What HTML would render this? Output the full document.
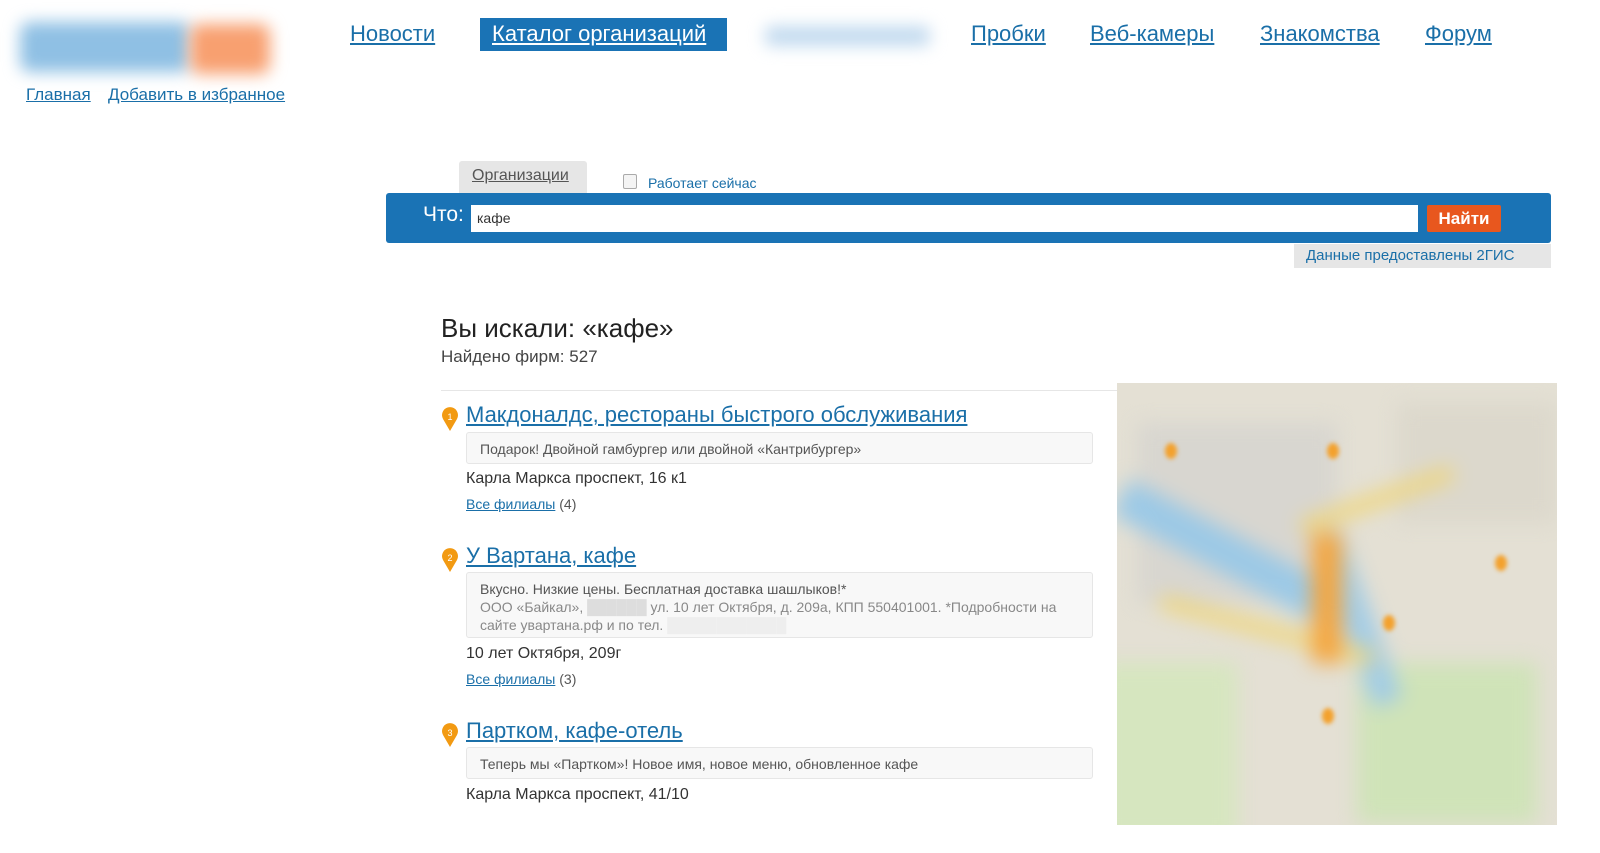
<!DOCTYPE html>
<html><head><meta charset="utf-8"><style>
*{margin:0;padding:0;box-sizing:border-box}
body{width:1600px;height:853px;background:#fff;font-family:"Liberation Sans",sans-serif;position:relative;overflow:hidden;color:#333}
.a{position:absolute}
a{color:#1a6fa8;text-decoration:underline}
.nav{font-size:22px;top:21px}
.blur{filter:blur(8px)}
.box{position:absolute;left:466px;width:627px;background:#f8f8f8;border:1px solid #e6e6e6;border-radius:3px;font-size:14px;color:#555;padding:7px 13px;line-height:18px}
.title{position:absolute;left:466px;font-size:22px}
.addr{position:absolute;left:466px;font-size:16px;color:#333}
.fil{position:absolute;left:466px;font-size:14px;color:#555}
.pin{position:absolute;left:441px;width:18px;height:26px}
</style></head><body>
<div class="a blur" style="left:20px;top:22px;width:170px;height:50px;background:#8fc0e4;border-radius:10px"></div>
<div class="a blur" style="left:190px;top:24px;width:80px;height:50px;background:#f8a070;border-radius:10px"></div>
<a class="a" style="left:26px;top:85px;font-size:17px">Главная</a>
<a class="a" style="left:108px;top:85px;font-size:17px">Добавить в избранное</a>
<a class="a nav" style="left:350px">Новости</a>
<div class="a" style="left:480px;top:18px;width:247px;height:33px;background:#1a73b5"></div>
<a class="a nav" style="left:492px;color:#fff">Каталог организаций</a>
<div class="a blur" style="left:765px;top:26px;width:165px;height:20px;background:#c2daef;border-radius:6px"></div>
<a class="a nav" style="left:971px">Пробки</a>
<a class="a nav" style="left:1090px">Веб-камеры</a>
<a class="a nav" style="left:1260px">Знакомства</a>
<a class="a nav" style="left:1425px">Форум</a>

<div class="a" style="left:459px;top:161px;width:128px;height:32px;background:#e6e6e6;border-radius:3px 3px 0 0"></div>
<a class="a" style="left:472px;top:167px;font-size:16px;color:#555">Организации</a>
<div class="a" style="left:623px;top:174px;width:14px;height:15px;border:1px solid #aaa;border-radius:2px;background:#f4f4f4"></div>
<div class="a" style="left:648px;top:175px;font-size:14px;color:#1a6fa8">Работает сейчас</div>
<div class="a" style="left:386px;top:193px;width:1165px;height:50px;background:#1a73b5;border-radius:3px"></div>
<div class="a" style="left:423px;top:203px;font-size:21px;color:#fff">Что:</div>
<div class="a" style="left:471px;top:205px;width:947px;height:27px;background:#fff;font-size:14px;padding:5px 6px;color:#333">кафе</div>
<div class="a" style="left:1427px;top:205px;width:74px;height:27px;background:#e8571e;color:#fff;font-weight:bold;font-size:17px;text-align:center;line-height:27px;border-radius:2px">Найти</div>
<div class="a" style="left:1294px;top:244px;width:257px;height:24px;background:#e6e6e6;font-size:15px;color:#1a6fa8;padding:3px 0 0 12px">Данные предоставлены 2ГИС</div>

<div class="a" style="left:441px;top:313px;font-size:26px;color:#222">Вы искали: «кафе»</div>
<div class="a" style="left:441px;top:347px;font-size:17px;color:#444">Найдено фирм: 527</div>
<div class="a" style="left:441px;top:390px;width:676px;height:1px;background:#e6e6e6"></div>

<svg class="pin" style="top:405px" viewBox="0 0 18 26"><path d="M9 26 L2 14 A8 8 0 1 1 16 14 Z" fill="#f29a12"/><text x="9" y="15" font-size="9" fill="#fff" text-anchor="middle" font-family="Liberation Sans">1</text></svg>
<a class="title" style="top:402px">Макдоналдс, рестораны быстрого обслуживания</a>
<div class="box" style="top:432px;height:32px">Подарок! Двойной гамбургер или двойной «Кантрибургер»</div>
<div class="addr" style="top:470px">Карла Маркса проспект, 16 к1</div>
<div class="fil" style="top:496px"><a>Все филиалы</a> (4)</div>

<svg class="pin" style="top:546px" viewBox="0 0 18 26"><path d="M9 26 L2 14 A8 8 0 1 1 16 14 Z" fill="#f29a12"/><text x="9" y="15" font-size="9" fill="#fff" text-anchor="middle" font-family="Liberation Sans">2</text></svg>
<a class="title" style="top:543px">У Вартана, кафе</a>
<div class="box" style="top:572px;height:66px">Вкусно. Низкие цены. Бесплатная доставка шашлыков!*<br><span style="color:#888">ООО «Байкал», <span style="color:#ddd">██████</span> ул. 10 лет Октября, д. 209а, КПП 550401001. *Подробности на сайте увартана.рф и по тел. <span style="color:#eee">████████████</span></span></div>
<div class="addr" style="top:645px">10 лет Октября, 209г</div>
<div class="fil" style="top:671px"><a>Все филиалы</a> (3)</div>

<svg class="pin" style="top:721px" viewBox="0 0 18 26"><path d="M9 26 L2 14 A8 8 0 1 1 16 14 Z" fill="#f29a12"/><text x="9" y="15" font-size="9" fill="#fff" text-anchor="middle" font-family="Liberation Sans">3</text></svg>
<a class="title" style="top:718px">Партком, кафе-отель</a>
<div class="box" style="top:747px;height:32px">Теперь мы «Партком»! Новое имя, новое меню, обновленное кафе</div>
<div class="addr" style="top:786px">Карла Маркса проспект, 41/10</div>

<div class="a" style="left:1117px;top:383px;width:440px;height:442px;overflow:hidden;background:#e4e0d4">
 <div class="a" style="left:-20px;top:-20px;width:480px;height:480px;filter:blur(10px)">
  <div class="a" style="left:40px;top:60px;width:200px;height:180px;background:#d8d6d0"></div>
  <div class="a" style="left:260px;top:300px;width:180px;height:160px;background:#cfe3b8"></div>
  <div class="a" style="left:0px;top:300px;width:140px;height:180px;background:#d6e6bf"></div>
  <div class="a" style="left:300px;top:40px;width:160px;height:120px;background:#dcd8cc"></div>
  <div class="a" style="left:10px;top:170px;width:240px;height:40px;background:#9cc9e6;transform:rotate(28deg)"></div>
  <div class="a" style="left:170px;top:240px;width:180px;height:30px;background:#a2cce6;transform:rotate(70deg)"></div>
  <div class="a" style="left:200px;top:130px;width:160px;height:14px;background:#f0d67a;transform:rotate(-20deg)"></div>
  <div class="a" style="left:60px;top:260px;width:220px;height:14px;background:#f0d67a;transform:rotate(15deg)"></div>
  <div class="a" style="left:215px;top:170px;width:30px;height:130px;background:#f4a640"></div>
 </div>
 <div class="a" style="left:48px;top:60px;width:12px;height:16px;background:#f3a12d;border-radius:50%;filter:blur(2px)"></div>
 <div class="a" style="left:210px;top:60px;width:12px;height:16px;background:#f3a12d;border-radius:50%;filter:blur(2px)"></div>
 <div class="a" style="left:378px;top:172px;width:12px;height:16px;background:#f3a12d;border-radius:50%;filter:blur(2px)"></div>
 <div class="a" style="left:266px;top:232px;width:12px;height:16px;background:#f3a12d;border-radius:50%;filter:blur(2px)"></div>
 <div class="a" style="left:205px;top:325px;width:12px;height:16px;background:#f3a12d;border-radius:50%;filter:blur(2px)"></div>
</div>
</body></html>
